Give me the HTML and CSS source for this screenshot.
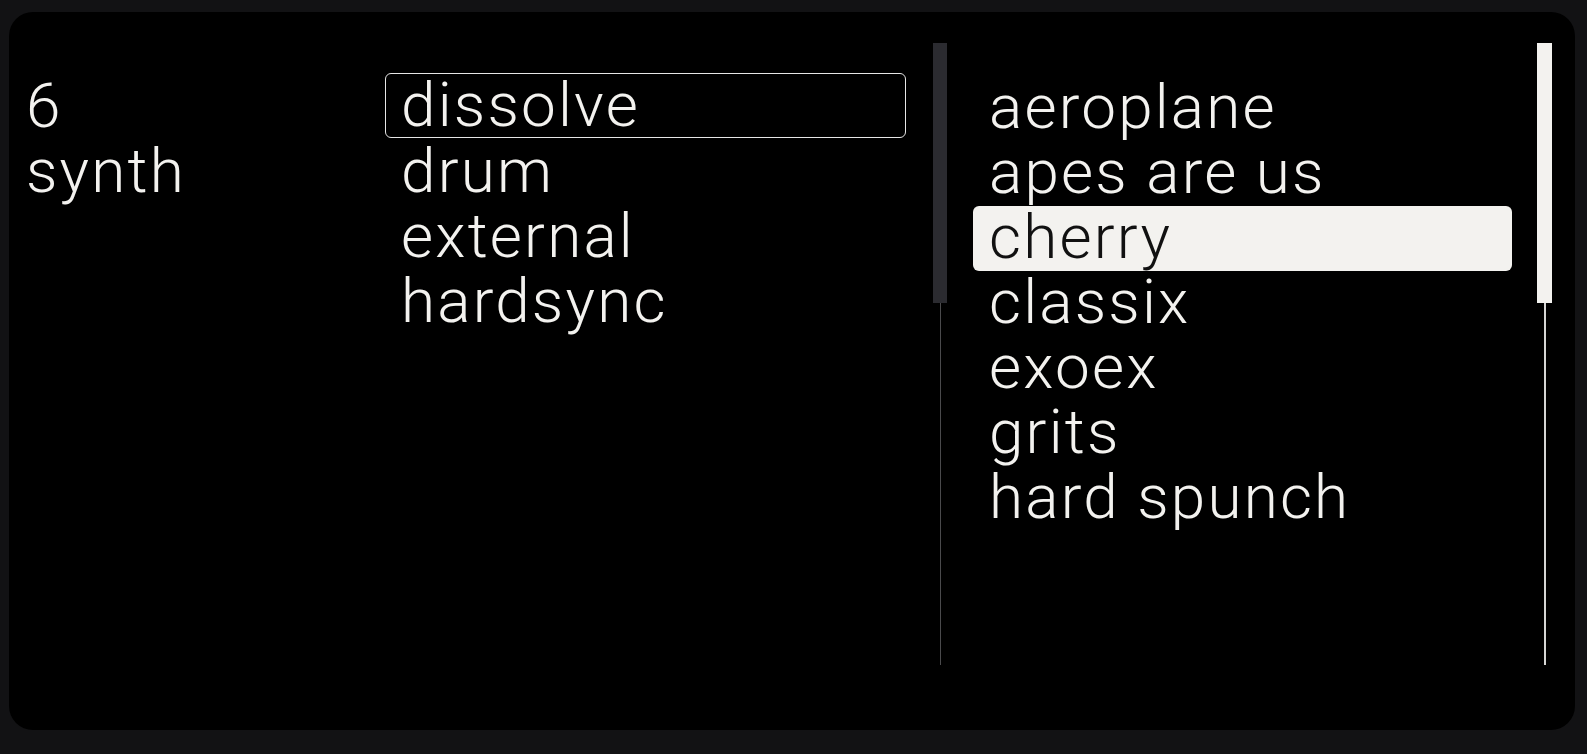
FILE: index.html
```html
<!DOCTYPE html>
<html>
<head>
<meta charset="utf-8">
<link rel="stylesheet" href="styles.css">
</head>
<body>
<div class="card">
  <div class="col-info">
    <div class="row">6</div>
    <div class="row">synth</div>
  </div>
  <div class="pane pane-mid">
    <ul class="list list-mid">
      <li class="item outlined">dissolve</li>
      <li class="item">drum</li>
      <li class="item">external</li>
      <li class="item">hardsync</li>
    </ul>
    <div class="scroll dim"><div class="thumb"></div><div class="track"></div></div>
  </div>
  <div class="pane pane-right">
    <ul class="list list-right">
      <li class="item">aeroplane</li>
      <li class="item">apes are us</li>
      <li class="item filled">cherry</li>
      <li class="item">classix</li>
      <li class="item">exoex</li>
      <li class="item">grits</li>
      <li class="item">hard spunch</li>
    </ul>
    <div class="scroll bright"><div class="thumb"></div><div class="track"></div></div>
  </div>
</div>
</body>
</html>
```
FILE: styles.css
```css
html, body {
  margin: 0;
  padding: 0;
  background: #121214;
}
body {
  padding: 12px 12px 0 9px;
  font-family: Roboto, "Liberation Sans", sans-serif;
  font-weight: 300;
  color: #f3f2ef;
}
.card {
  height: 718px;
  background: #000;
  border-radius: 24px;
  display: flex;
  box-sizing: border-box;
  padding-top: 31px;
}
.row, .item {
  font-size: 62px;
  letter-spacing: 2.2px;
  line-height: 65px;
  height: 65px;
  white-space: nowrap;
}
.col-info {
  width: 376px;
  padding-top: 30px;
  padding-left: 17px;
  box-sizing: border-box;
}
.pane {
  display: flex;
  align-items: flex-start;
}
.list {
  list-style: none;
  margin: 0;
  padding: 0;
}
.list-mid {
  width: 521px;
  padding-top: 30px;
  margin-right: 27px;
}
.list-right {
  width: 539px;
  padding-top: 33px;
  margin-left: 26px;
  margin-right: 25px;
}
.item {
  box-sizing: border-box;
  padding-left: 16px;
  border-radius: 6px;
}
.list-right .item {
  line-height: 61px;
}
.item.outlined {
  border: 1px solid #e6e6e6;
  padding-left: 15px;
  line-height: 61px;
}
.item.filled {
  background: #f3f2ef;
  color: #111;
}
.scroll {
  width: 14px;
  height: 622px;
  display: flex;
  flex-direction: column;
  align-items: center;
}
.scroll .thumb {
  width: 100%;
  height: 260px;
  flex: none;
}
.scroll .track {
  flex: 1;
}
.dim .thumb { background: #2b2b30; }
.dim .track { width: 1px; background: #4a4a4c; }
.bright { width: 15px; }
.bright .thumb { background: #f3f2ef; }
.bright .track { width: 2px; background: #d6d6d4; }
```
